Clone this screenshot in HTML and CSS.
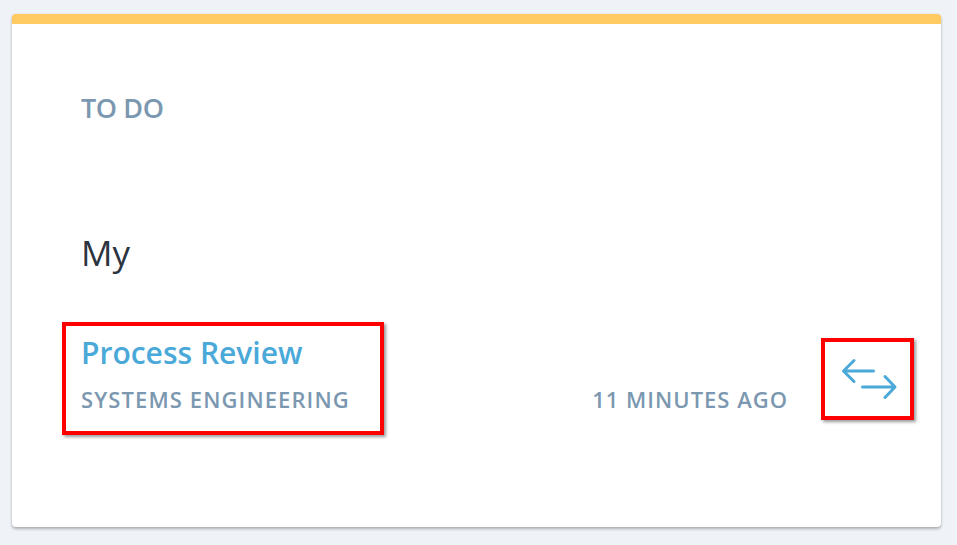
FILE: index.html
```html
<!DOCTYPE html>
<html lang="en">
<head>
<meta charset="utf-8">
<title>To do card</title>
<link rel="stylesheet" href="styles.css">
</head>
<body>
  <div class="card">
    <div class="status">TO DO</div>
    <div class="heading">My</div>
    <div class="row">
      <div class="item highlight">
        <div class="item-title">Process Review</div>
        <div class="item-sub">SYSTEMS ENGINEERING</div>
      </div>
      <div class="spacer"></div>
      <div class="time">11 MINUTES AGO</div>
      <div class="action highlight">
        <svg class="swap" width="58" height="44" viewBox="0 0 58 44" fill="none" stroke="#4aa9d8" stroke-width="3" stroke-linecap="round" stroke-linejoin="round">
          <path d="M3.5 14H33.5M14 3.5L3.5 14L14 24.5"/>
          <path d="M22.5 30H55M45 19.5L55 30L45 40.5"/>
        </svg>
      </div>
    </div>
  </div>
</body>
</html>
```

FILE: styles.css
```css
html, body {
  margin: 0;
  padding: 0;
}
body {
  background: #eff3f8;
  font-family: "Open Sans", "Lato", sans-serif;
  padding: 14px 16px 18px 12px;
  width: 957px;
  height: 545px;
  box-sizing: border-box;
}
.card {
  box-sizing: border-box;
  width: 929px;
  height: 513px;
  background: #fff;
  border-top: 10px solid #ffcb62;
  border-radius: 4px;
  box-shadow: 0 2px 3px rgba(0, 0, 0, 0.28), 0 0 2px rgba(0, 0, 0, 0.08);
  padding: 66px 27px 0 69px;
}
.status {
  font-size: 27px;
  line-height: 36px;
  font-weight: 600;
  letter-spacing: -0.4px;
  color: #7b98b0;
  height: 36px;
}
.heading {
  margin-top: 106px;
  font-size: 35px;
  line-height: 42px;
  color: #2b3440;
}
.row {
  margin-top: 48px;
  display: flex;
  align-items: center;
}
.highlight {
  border: 4px solid #ff0000;
  box-shadow: 2px 2px 3px rgba(0, 0, 0, 0.4);
  box-sizing: border-box;
}
.item {
  margin-left: -19px;
  width: 322px;
  height: 113px;
  padding: 9px 0 0 15px;
}
.item-title {
  font-size: 30px;
  line-height: 36px;
  font-weight: 600;
  color: #4aa9d8;
}
.item-sub {
  margin-top: 15px;
  font-size: 22px;
  line-height: 26px;
  font-weight: 600;
  letter-spacing: 1.1px;
  color: #7b98b0;
  white-space: nowrap;
}
.spacer {
  flex: 1;
}
.time {
  align-self: flex-end;
  margin-bottom: 23px;
  font-size: 22px;
  line-height: 26px;
  font-weight: 600;
  letter-spacing: 1px;
  color: #7b98b0;
  margin-right: 33px;
  white-space: nowrap;
}
.action {
  width: 93px;
  height: 82px;
  display: flex;
  align-items: center;
  justify-content: center;
}
.swap {
  display: block;
  margin-left: 2px;
}
```
